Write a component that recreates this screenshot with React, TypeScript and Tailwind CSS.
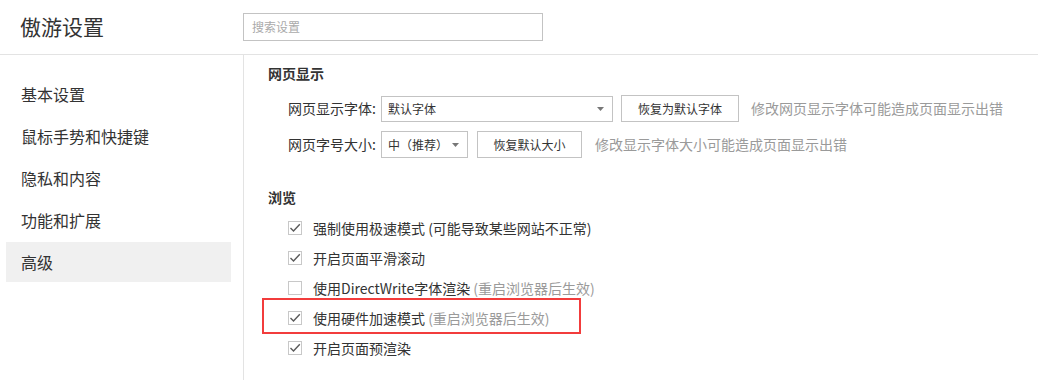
import React from "react";

const font = { fontFamily: '"Noto Sans CJK SC", "Microsoft YaHei", sans-serif' };

function Check({ checked }: { checked: boolean }) {
  return (
    <span className="w-[14px] h-[14px] border border-[#c8c8c8] bg-white flex items-center justify-center shrink-0">
      {checked && (
        <svg width="12" height="12" viewBox="0 0 12 12">
          <polyline points="1.5,6 4.5,9 10.8,2.2" fill="none" stroke="#5a5a5a" strokeWidth="1.4" />
        </svg>
      )}
    </span>
  );
}

function Row({ checked, text, hint }: { checked: boolean; text: string; hint?: string }) {
  return (
    <div className="h-[30px] flex items-center pl-[20px]">
      <Check checked={checked} />
      <span className="ml-[11px] text-[14px] leading-[20px] text-[#333]">
        {text}
        {hint && <span className="text-[#9a9a9a]">{hint}</span>}
      </span>
    </div>
  );
}

function Arrow() {
  return (
    <svg width="7" height="4" viewBox="0 0 7 4">
      <polygon points="0,0 7,0 3.5,4" fill="#777" />
    </svg>
  );
}

export default function App() {
  const items = ["基本设置", "鼠标手势和快捷键", "隐私和内容", "功能和扩展", "高级"];
  return (
    <div className="w-[1038px] h-[380px] bg-white overflow-hidden text-[#333]" style={font}>
      <div className="h-[55px] flex items-center border-b border-[#e3e3e3]">
        <div className="w-[243px] pl-[20px] text-[21px] leading-[28px] text-[#333] pb-[2px]">傲游设置</div>
        <div className="w-[300px] h-[28px] border border-[#c3c3c3] flex items-center pl-[8px] text-[12px] text-[#aaa]">
          搜索设置
        </div>
      </div>
      <div className="flex h-[325px]">
        <div className="w-[244px] border-r border-[#e3e3e3] pt-[19px] flex flex-col gap-[2px]">
          {items.map((t, i) => (
            <div
              key={t}
              className={
                "mx-[6px] mr-[12px] h-[40px] flex items-center pl-[15px] text-[16px] text-[#333] " +
                (i === 4 ? "bg-[#f0f0f0]" : "")
              }
            >
              {t}
            </div>
          ))}
        </div>
        <div className="flex-1 pl-[24px] pt-[8px] flex flex-col">
          <div className="h-[20px] leading-[20px] text-[14px] font-bold text-[#333]">网页显示</div>
          <div className="mt-[12px] flex items-center pl-[20px] h-[27px]">
            <span className="w-[93px] text-[14px] text-[#333]">网页显示字体:</span>
            <div className="w-[232px] h-[26px] border border-[#c3c3c3] flex items-center justify-between pl-[6px] pr-[8px] text-[12px] text-[#333]">
              <span>默认字体</span>
              <Arrow />
            </div>
            <div className="ml-[8px] w-[118px] h-[27px] border border-[#c3c3c3] flex items-center justify-center text-[12px] text-[#333]">
              恢复为默认字体
            </div>
            <span className="ml-[12px] text-[14px] text-[#9a9a9a]">修改网页显示字体可能造成页面显示出错</span>
          </div>
          <div className="mt-[9px] flex items-center pl-[20px] h-[27px]">
            <span className="w-[93px] text-[14px] text-[#333]">网页字号大小:</span>
            <div className="w-[87px] h-[27px] border border-[#c3c3c3] flex items-center justify-between pl-[6px] pr-[8px] text-[12px] text-[#333]">
              <span>中（推荐）</span>
              <Arrow />
            </div>
            <div className="ml-[9px] w-[105px] h-[27px] border border-[#c3c3c3] flex items-center justify-center text-[12px] text-[#333]">
              恢复默认大小
            </div>
            <span className="ml-[13px] text-[14px] text-[#9a9a9a]">修改显示字体大小可能造成页面显示出错</span>
          </div>
          <div className="mt-[29px] h-[20px] leading-[20px] text-[14px] font-bold text-[#333]">浏览</div>
          <div className="mt-[6px] flex flex-col">
            <Row checked text="强制使用极速模式 (可能导致某些网站不正常)" />
            <Row checked text="开启页面平滑滚动" />
            <Row checked={false} text="使用DirectWrite字体渲染 " hint="(重启浏览器后生效)" />
            <div className="relative">
              <Row checked text="使用硬件加速模式 " hint="(重启浏览器后生效)" />
              <div className="absolute left-[-6px] top-[-5px] w-[319px] h-[36px] border-2 border-[#f23c3c] pointer-events-none" />
            </div>
            <Row checked text="开启页面预渲染" />
          </div>
        </div>
      </div>
    </div>
  );
}
